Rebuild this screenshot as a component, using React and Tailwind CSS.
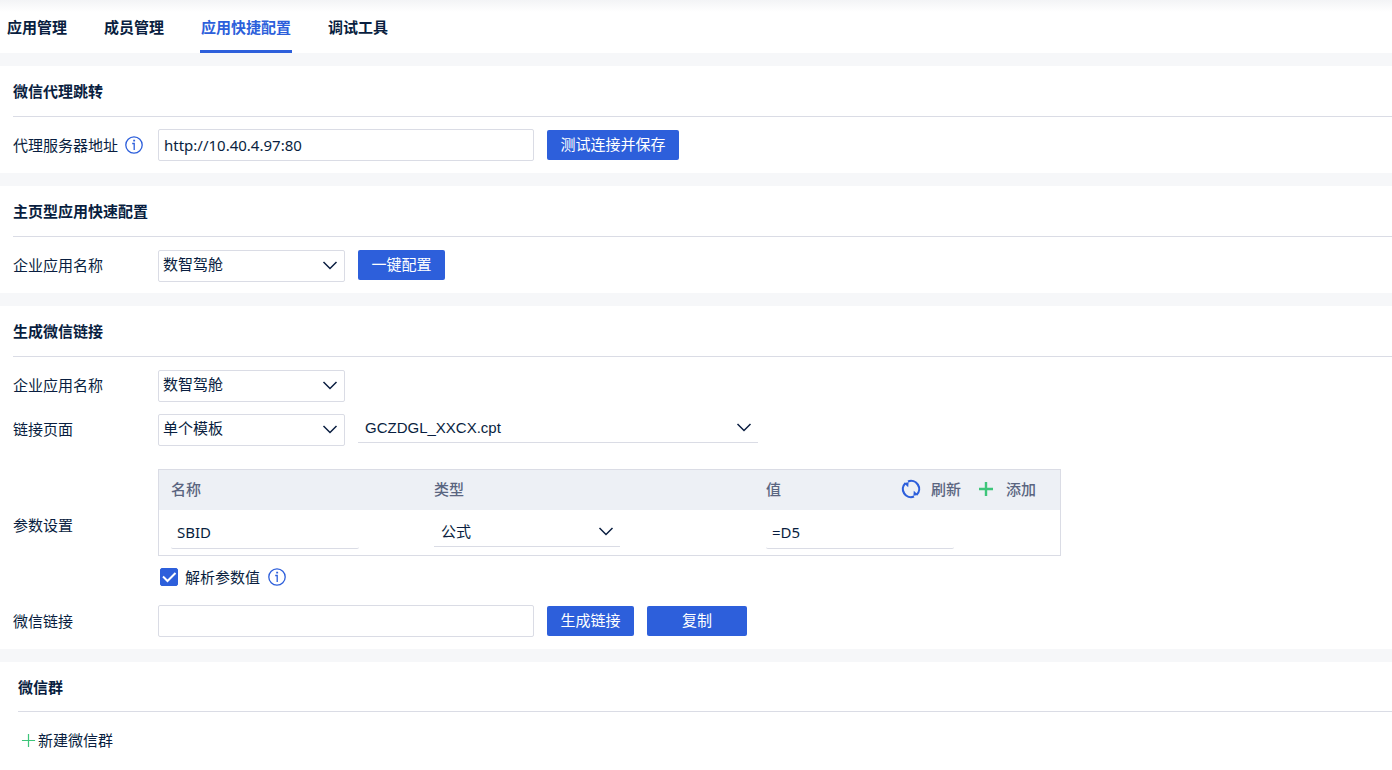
import { useState } from 'react'

const TABS = ['应用管理', '成员管理', '应用快捷配置', '调试工具']

export default function App() {
  const [tab, setTab] = useState('应用快捷配置')
  const [parse, setParse] = useState(true)

  return (
    <div className="min-h-screen flex flex-col bg-white text-[15px] leading-5 text-[#091e40] font-['Noto_Sans','Noto_Sans_CJK_SC',sans-serif]">
      <nav className="h-[53px] flex items-stretch gap-[35px] pl-1.5 bg-linear-to-b from-[#f3f4f6] to-white to-[12px]">
        {TABS.map(name => (
          <button
            key={name}
            type="button"
            onClick={() => setTab(name)}
            className={
              name === tab
                ? 'px-px pt-[5px] pb-0.5 font-bold text-[#2d5fdb] border-b-3 border-[#2d5fdb]'
                : 'px-px pt-[5px] pb-0.5 font-bold border-b-3 border-transparent'
            }
          >
            {name}
          </button>
        ))}
      </nav>

      <main className="grow flex flex-col gap-[13px] pt-[13px] bg-[#f6f7f9]">
        <Section title="微信代理跳转">
          <Row label="代理服务器地址" htmlFor="proxy" info>
            <input id="proxy" type="text" defaultValue="http://10.40.4.97:80" className="w-[376px] h-8 px-[5px] border border-[#dadce5] rounded-xs" />
            <Button className="w-[132px]">测试连接并保存</Button>
          </Row>
        </Section>

        <Section title="主页型应用快速配置">
          <Row label="企业应用名称" htmlFor="home-app">
            <BoxSelect id="home-app" options={['数智驾舱']} />
            <Button className="w-[87px]">一键配置</Button>
          </Row>
        </Section>

        <Section title="生成微信链接">
          <Row label="企业应用名称" htmlFor="link-app">
            <BoxSelect id="link-app" options={['数智驾舱']} />
          </Row>

          <Row label="链接页面" htmlFor="page-type">
            <BoxSelect id="page-type" options={['单个模板']} />
            <LineSelect
              label="模板"
              options={['GCZDGL_XXCX.cpt']}
              className="w-[400px] font-['Liberation_Sans',sans-serif]"
            />
          </Row>

          <div className="flex items-center">
            <span className="w-[145px] shrink-0">参数设置</span>
            <div className="pt-3">
              <ParamTable />
              <div className="mt-[5px] h-8 flex items-center gap-2 pl-0.5">
                <label className="flex items-center gap-[7px]">
                  <span className="relative flex size-[18px]">
                    <input
                      type="checkbox"
                      checked={parse}
                      onChange={e => setParse(e.target.checked)}
                      className="appearance-none size-[18px] rounded-xs border border-[#dadce5] checked:bg-[#2d5fdb] checked:border-[#2d5fdb]"
                    />
                    {parse && <CheckIcon />}
                  </span>
                  解析参数值
                </label>
                <InfoIcon />
              </div>
            </div>
          </div>

          <Row label="微信链接" htmlFor="wx-link">
            <input id="wx-link" type="text" className="w-[376px] h-8 px-[5px] border border-[#dadce5] rounded-xs" />
            <Button className="w-[87px]">生成链接</Button>
            <Button className="w-[100px]">复制</Button>
          </Row>
        </Section>

        <section className="grow bg-white pl-[18px]">
          <h2 className="h-[49px] flex items-center font-bold">微信群</h2>
          <div className="border-t border-[#dadce5] py-3 pl-[3px]">
            <button type="button" className="h-8 flex items-center gap-0.5">
              <PlusIcon className="size-[15px] stroke-[1.3]" />
              新建微信群
            </button>
          </div>
        </section>
      </main>
    </div>
  )
}

function Section({ title, children }) {
  return (
    <section className="bg-white pl-[13px]">
      <h2 className="h-[50px] flex items-center font-bold">{title}</h2>
      <div className="border-t border-[#dadce5] py-3 flex flex-col gap-3">{children}</div>
    </section>
  )
}

function Row({ label, htmlFor, info, children }) {
  return (
    <div className="h-8 flex items-center">
      <div className="w-[145px] shrink-0 flex items-center gap-[7px]">
        <label htmlFor={htmlFor}>{label}</label>
        {info && <InfoIcon />}
      </div>
      <div className="flex items-center gap-[13px]">{children}</div>
    </div>
  )
}

function Button({ className, children }) {
  return (
    <button type="button" className={`h-[30px] pb-0.5 rounded-xs bg-[#2d5fdb] text-white text-center ${className}`}>
      {children}
    </button>
  )
}

// bordered drop-down
function BoxSelect({ id, options }) {
  return (
    <div className="relative mt-0.5 w-[187px]">
      <select id={id} className="block appearance-none w-full h-8 pl-1 pr-8 pb-1 bg-white border border-[#dadce5] rounded-xs">
        {options.map(o => (
          <option key={o}>{o}</option>
        ))}
      </select>
      <ChevronIcon className="right-[7px] top-[7px]" />
    </div>
  )
}

// drop-down with an underline only
function LineSelect({ label, options, className }) {
  return (
    <div className={`relative ${className}`}>
      <select aria-label={label} className="block appearance-none w-full h-7 pl-[7px] pr-8 pb-0.5 bg-white border-b border-[#dadce5]">
        {options.map(o => (
          <option key={o}>{o}</option>
        ))}
      </select>
      <ChevronIcon className="right-1.5 top-1" />
    </div>
  )
}

function ParamTable() {
  return (
    <div className="w-[903px] border border-[#dadce5]">
      <table className="w-full table-fixed">
        <colgroup>
          <col className="w-[263px]" />
          <col className="w-[332px]" />
          <col />
        </colgroup>
        <thead className="bg-[#edf0f5] text-[#5a6580]">
          <tr className="h-10">
            <th className="pl-3 pb-0.5 text-left font-medium">名称</th>
            <th className="pl-3 pb-0.5 text-left font-medium">类型</th>
            <th className="pl-3 pr-6 pb-0.5 text-left font-medium">
              <div className="flex items-center justify-between">
                值
                <div className="flex items-center gap-[17px]">
                  <button type="button" className="flex items-center gap-2.5">
                    <RefreshIcon />
                    刷新
                  </button>
                  <button type="button" className="flex items-center gap-3">
                    <PlusIcon className="size-4 stroke-[2.4]" />
                    添加
                  </button>
                </div>
              </div>
            </th>
          </tr>
        </thead>
        <tbody>
          <tr className="h-[45px]">
            <td className="pl-3">
              <input type="text" aria-label="名称" defaultValue="SBID" className="block w-[188px] h-8 px-1.5 border-b border-[#dadce5] rounded-xs" />
            </td>
            <td className="pl-3">
              <LineSelect label="类型" options={['公式']} className="w-[186px]" />
            </td>
            <td className="pl-3">
              <input type="text" aria-label="值" defaultValue="=D5" className="block w-[188px] h-8 px-1.5 border-b border-[#dadce5] rounded-xs" />
            </td>
          </tr>
        </tbody>
      </table>
    </div>
  )
}

function ChevronIcon({ className }) {
  return (
    <svg viewBox="0 0 16 16" aria-hidden="true" className={`absolute size-4 pointer-events-none fill-none stroke-[#091e40] stroke-[1.5] ${className}`}>
      <path d="M1.5 5 L8 11.5 L14.5 5" />
    </svg>
  )
}

function CheckIcon() {
  return (
    <svg viewBox="0 0 18 18" aria-hidden="true" className="absolute inset-0 size-[18px] pointer-events-none fill-none stroke-white stroke-2">
      <path d="M3 8.5 L7.5 13 L15.5 5" />
    </svg>
  )
}

function InfoIcon() {
  return (
    <svg viewBox="0 0 18 18" aria-hidden="true" className="size-[18px] fill-none stroke-[#2d5fdb] stroke-[1.3]">
      <circle cx="9" cy="9" r="8.2" />
      <path d="M7.2 7.5 H9.2 V14" />
      <path d="M8.2 4.6 H10.1" strokeWidth="1.7" />
    </svg>
  )
}

function PlusIcon({ className }) {
  return (
    <svg viewBox="0 0 16 16" aria-hidden="true" className={`fill-none stroke-[#3dc57a] ${className}`}>
      <path d="M1 8 H15 M8 1 V15" />
    </svg>
  )
}

function RefreshIcon() {
  return (
    <svg viewBox="0 0 20 20" aria-hidden="true" className="size-5 fill-none stroke-[#2d5fdb] stroke-[2.2]">
      <path d="M7 2.4 A8.1 8.1 0 0 1 15.6 15.8" />
      <path d="M13 17.6 A8.1 8.1 0 0 1 4.4 4.2" />
      <path d="M2.8 4 L7.6 3.2 L7.2 8.2 Z" fill="#2d5fdb" stroke="none" />
      <path d="M17.2 16 L12.4 16.8 L12.8 11.8 Z" fill="#2d5fdb" stroke="none" />
    </svg>
  )
}
